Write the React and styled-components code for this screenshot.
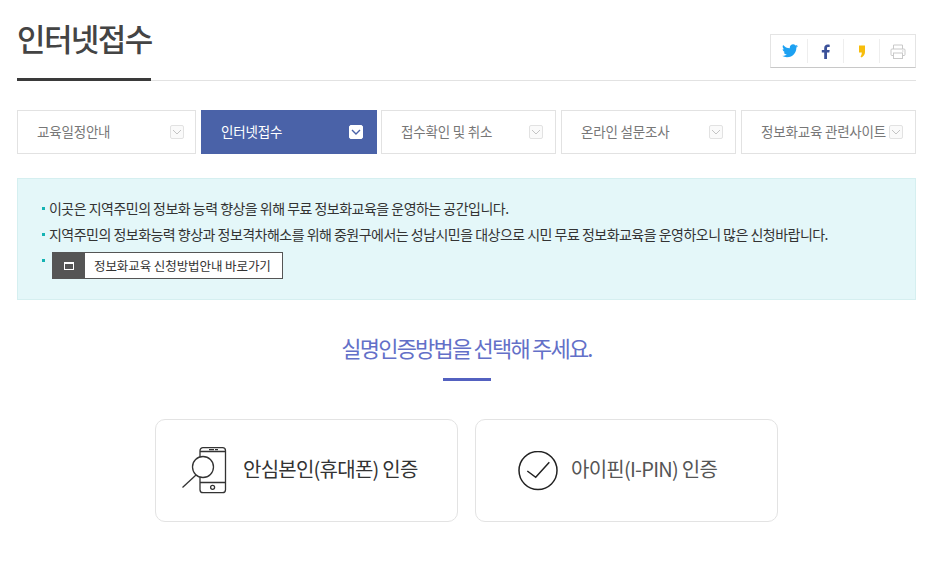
import React from 'react';
import styled, { createGlobalStyle } from 'styled-components';

const GlobalStyle = createGlobalStyle`
  html, body {
    margin: 0;
    padding: 0;
    background: #fff;
  }
  body {
    font-family: "Noto Sans CJK KR", "Noto Sans", sans-serif;
    color: #333;
  }
`;

const Page = styled.div`
  width: 899px;
  height: 564px;
  padding-left: 17px;
  overflow: hidden;
`;

const Header = styled.div`
  height: 81px;
  display: flex;
  justify-content: space-between;
  align-items: flex-start;
  border-bottom: 1px solid #e2e2e2;
  box-sizing: border-box;
`;

const Title = styled.h1`
  margin: 0;
  height: 81px;
  box-sizing: border-box;
  padding-top: 15px;
  border-bottom: 3px solid #3a3a3a;
  font-size: 31px;
  line-height: 46px;
  font-weight: 500;
  letter-spacing: -1.6px;
  color: #444;
  width: 134px;
  white-space: nowrap;
`;

const ShareBox = styled.div`
  margin-top: 34px;
  width: 146px;
  height: 34px;
  box-sizing: border-box;
  display: flex;
  align-items: center;
  padding-left: 1px;
  border: 1px solid #e4e4e4;
  border-bottom-color: #c8c8c8;
  background: #fff;
`;

const ShareItem = styled.div`
  flex: 1;
  height: 24px;
  display: flex;
  align-items: center;
  justify-content: center;
  border-left: ${p => (p.$first ? 'none' : '1px solid #eee')};
`;

const Tabs = styled.div`
  display: flex;
  margin-top: 29px;
`;

const Tab = styled.div`
  width: ${p => p.$w}px;
  margin-left: ${p => p.$gap}px;
  height: 44px;
  box-sizing: border-box;
  display: flex;
  align-items: center;
  justify-content: space-between;
  padding: 0 ${p => p.$pr}px 0 ${p => (p.$active ? 20 : 19)}px;
  background: ${p => (p.$active ? '#4a62a8' : '#fff')};
  border: ${p => (p.$active ? 'none' : '1px solid #e2e2e2')};
  color: ${p => (p.$active ? '#fff' : '#777')};
  font-size: 13.5px;
  letter-spacing: -0.2px;
  white-space: nowrap;
`;

const TabLabel = styled.span`
  margin-bottom: 3px;
`;

const CheckBox = styled.span`
  width: 14px;
  height: 14px;
  box-sizing: border-box;
  flex: none;
  display: flex;
  align-items: center;
  justify-content: center;
  border-radius: 2px;
  border: 1px solid ${p => (p.$active ? '#fff' : '#e2e2e2')};
  background: ${p => (p.$active ? '#fff' : '#fafafa')};
`;

const Notice = styled.div`
  margin-top: 24px;
  width: 899px;
  height: 122px;
  box-sizing: border-box;
  padding: 16px 24px 0;
  background: #e4f7f9;
  border: 1px solid #d5eff0;
`;

const NoticeRow = styled.div`
  position: relative;
  padding-left: 7px;
  height: 26px;
  display: flex;
  align-items: center;
  font-size: 14px;
  letter-spacing: -0.52px;
  color: #333;
  white-space: nowrap;

  &::before {
    content: '';
    position: absolute;
    left: 0;
    top: 12px;
    width: 3px;
    height: 3px;
    background: #14b3b3;
  }
`;

const LinkRow = styled(NoticeRow)`
  height: 30px;
  margin-top: 5px;
  align-items: flex-start;

  &::before {
    top: 7px;
  }
`;

const GuideLink = styled.a`
  margin-left: 3px;
  height: 27px;
  width: 231px;
  box-sizing: border-box;
  display: flex;
  align-items: center;
  background: #fff;
  border: 1px solid #555;
  color: #333;
  font-size: 12.5px;
  letter-spacing: -0.08px;
`;

const GuideIcon = styled.span`
  width: 32px;
  height: 100%;
  flex: none;
  background: #555;
  display: flex;
  align-items: center;
  justify-content: center;
  margin-right: 9px;

  &::after {
    content: '';
    width: 10px;
    height: 8px;
    box-sizing: border-box;
    border: 1px solid #fff;
    border-top-width: 2px;
  }
`;

const Heading = styled.h2`
  margin: 29px 0 0;
  text-align: center;
  font-size: 22px;
  line-height: 36px;
  font-weight: 400;
  letter-spacing: -1.8px;
  color: #6370c8;
`;

const HeadingBar = styled.div`
  width: 48px;
  height: 3px;
  margin: 13px auto 0;
  background: #5361c0;
`;

const Cards = styled.div`
  display: flex;
  justify-content: center;
  gap: 17px;
  margin-top: 38px;
`;

const Card = styled.a`
  width: 303px;
  height: 103px;
  box-sizing: border-box;
  display: flex;
  align-items: center;
  padding-left: ${p => p.$pl}px;
  gap: ${p => p.$gap}px;
  background: #fff;
  border: 1px solid #e3e3e3;
  border-radius: 10px;
  font-size: 20px;
  letter-spacing: -0.75px;
  color: ${p => p.$color};
  white-space: nowrap;
`;

const CardLabel = styled.span`
  margin-bottom: 4px;
`;

const tabs = [
  { label: '교육일정안내', w: 179, gap: 0, pr: 11 },
  { label: '인터넷접수', w: 176, gap: 5, pr: 14, active: true },
  { label: '접수확인 및 취소', w: 175, gap: 4, pr: 12 },
  { label: '온라인 설문조사', w: 175, gap: 5, pr: 12 },
  { label: '정보화교육 관련사이트', w: 175, gap: 5, pr: 12 },
];

const Chevron = ({ active }) => (
  <svg width="10" height="6" viewBox="0 0 10 6" fill="none">
    <path d="M1 1l4 4 4-4" stroke={active ? '#4a62a8' : '#c4c4c4'} strokeWidth={active ? 1.4 : 1} />
  </svg>
);

const TwitterIcon = () => (
  <svg width="16" height="14" viewBox="0 0 24 20">
    <path fill="#1da1f2" d="M24 2.4c-.9.4-1.8.7-2.8.8 1-.6 1.8-1.6 2.2-2.7-1 .6-2 1-3.100 1.200C19.300.7 18 0 16.600 0c-2.700 0-4.900 2.200-4.900 4.900 0 .4 0 .8.100 1.100C7.700 5.800 4.100 3.900 1.700.9c-.4.700-.7 1.600-.7 2.500 0 1.700.9 3.200 2.200 4.100-.8 0-1.600-.2-2.200-.6v.1c0 2.400 1.700 4.400 3.900 4.800-.4.100-.8.200-1.300.2-.3 0-.6 0-.9-.1.600 2 2.400 3.400 4.600 3.400-1.700 1.300-3.800 2.100-6.100 2.100-.4 0-.8 0-1.200-.1 2.200 1.400 4.800 2.200 7.500 2.200 9.100 0 14-7.500 14-14v-.6c1-.7 1.800-1.600 2.500-2.500z" />
  </svg>
);

const FacebookIcon = () => (
  <svg width="9" height="15" viewBox="0 0 9 15">
    <path fill="#3b5199" d="M6 15V8.500h2.300l.4-2.600H6V4.300c0-.8.300-1.300 1.300-1.300h1.400V.7C8.400.6 7.600.5 6.700.5 4.700.5 3.200 1.800 3.200 4v1.900H.8v2.600h2.400V15z" />
  </svg>
);

const KakaoIcon = () => (
  <svg width="8" height="13" viewBox="0 0 8 13">
    <path fill="#f7bd0b" d="M1 .5h6v6.500C7 9.500 5.500 11.500 3.500 12.500L2.500 11.500C3.300 10.500 3.700 9.500 3.800 7.500H1z" />
  </svg>
);

const PrintIcon = () => (
  <svg width="16" height="15" viewBox="0 0 16 15" fill="none" stroke="#c9c9c9" strokeWidth="1">
    <path d="M3.500 5V1h9v4" />
    <rect x="1" y="5" width="14" height="6.500" rx="1" />
    <rect x="3.500" y="9" width="9" height="5.500" fill="#fff" />
    <path d="M12 7h1.500" />
  </svg>
);

const PhoneSearchIcon = () => (
  <svg width="45" height="47" viewBox="0 0 45 47" fill="none" stroke="#333" strokeWidth="1.3">
    <rect x="18" y="0.7" width="25.500" height="45" rx="3" />
    <path d="M18 4.500h25.500M18 35.500h25.500" />
    <path d="M27 2.600h9" strokeWidth="1.400" strokeDasharray="5 1 3" />
    <circle cx="30.600" cy="40.300" r="2" />
    <circle cx="21" cy="20" r="10.500" fill="#fff" />
    <path d="M14 28L0.500 40.500" />
  </svg>
);

const CheckCircleIcon = () => (
  <svg width="40" height="40" viewBox="0 0 40 40" fill="none" stroke="#222" strokeWidth="1.500">
    <circle cx="20" cy="19.500" r="19" />
    <path d="M9.300 20l8.400 6.300L31.300 11.300" />
  </svg>
);

const shareIcons = [TwitterIcon, FacebookIcon, KakaoIcon, PrintIcon];

const App = () => (
  <Page>
    <GlobalStyle />
    <Header>
      <Title>인터넷접수</Title>
      <ShareBox>
        {shareIcons.map((Icon, i) => (
          <ShareItem key={i} $first={i === 0}>
            <Icon />
          </ShareItem>
        ))}
      </ShareBox>
    </Header>

    <Tabs>
      {tabs.map(t => (
        <Tab key={t.label} $w={t.w} $gap={t.gap} $pr={t.pr} $active={t.active}>
          <TabLabel>{t.label}</TabLabel>
          <CheckBox $active={t.active}>
            <Chevron active={t.active} />
          </CheckBox>
        </Tab>
      ))}
    </Tabs>

    <Notice>
      <NoticeRow>이곳은 지역주민의 정보화 능력 향상을 위해 무료 정보화교육을 운영하는 공간입니다.</NoticeRow>
      <NoticeRow>지역주민의 정보화능력 향상과 정보격차해소를 위해 중원구에서는 성남시민을 대상으로 시민 무료 정보화교육을 운영하오니 많은 신청바랍니다.</NoticeRow>
      <LinkRow>
        <GuideLink>
          <GuideIcon />
          정보화교육 신청방법안내 바로가기
        </GuideLink>
      </LinkRow>
    </Notice>

    <Heading>실명인증방법을 선택해 주세요.</Heading>
    <HeadingBar />

    <Cards>
      <Card $pl={26} $gap={16} $color="#333">
        <PhoneSearchIcon />
        <CardLabel>안심본인(휴대폰) 인증</CardLabel>
      </Card>
      <Card $pl={42} $gap={13} $color="#555">
        <CheckCircleIcon />
        <CardLabel>아이핀(I-PIN) 인증</CardLabel>
      </Card>
    </Cards>
  </Page>
);

export default App;
